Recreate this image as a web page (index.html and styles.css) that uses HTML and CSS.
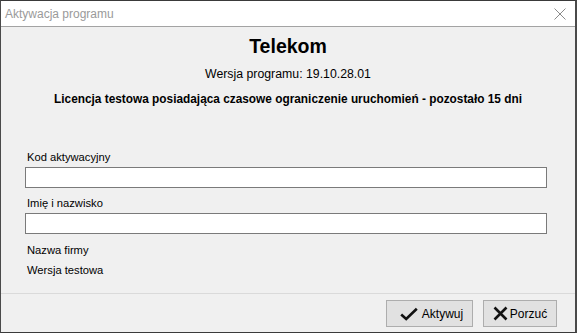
FILE: index.html
```html
<!DOCTYPE html>
<html lang="pl">
<head>
<meta charset="utf-8">
<link rel="stylesheet" href="styles.css">
</head>
<body>
<div class="window">
  <div class="titlebar">
    <span class="title">Aktywacja programu</span>
    <span class="close">
      <svg width="12" height="12" viewBox="0 0 12 12"><path d="M0.5 0.5 L11.5 11.5 M11.5 0.5 L0.5 11.5" stroke="#8a8a8a" stroke-width="1" fill="none"/></svg>
    </span>
  </div>
  <div class="content">
    <div class="app-name">Telekom</div>
    <div class="version">Wersja programu: 19.10.28.01</div>
    <div class="license">Licencja testowa posiadająca czasowe ograniczenie uruchomień - pozostało 15 dni</div>
    <div class="form">
      <label class="label">Kod aktywacyjny</label>
      <div class="input"></div>
      <label class="label">Imię i nazwisko</label>
      <div class="input"></div>
      <div class="label info first-info">Nazwa firmy</div>
      <div class="label info">Wersja testowa</div>
    </div>
  </div>
  <div class="footer">
    <button class="btn btn-ok">
      <svg width="18" height="14" viewBox="0 0 18 14"><path d="M1.2 7.5 L6.2 12 L16.8 1.8" stroke="#111" stroke-width="2.6" fill="none" stroke-linejoin="miter"/></svg>
      <span>Aktywuj</span>
    </button>
    <button class="btn btn-cancel">
      <svg width="15" height="15" viewBox="0 0 15 15"><path d="M1.5 1.5 L13.5 13.5 M13.5 1.5 L1.5 13.5" stroke="#111" stroke-width="2.6" fill="none"/></svg>
      <span>Porzuć</span>
    </button>
  </div>
</div>
</body>
</html>
```
FILE: styles.css
```css
html, body {
  margin: 0;
  padding: 0;
  background: #2a2a2a;
}
.window {
  width: 577px;
  height: 333px;
  box-sizing: border-box;
  border-top: 1px solid #3a3a3a;
  border-left: 1px solid #4a4a4a;
  border-right: 2px solid #4a4a4a;
  border-bottom: 1px solid #3a3a3a;
  background: #f0f0f0;
  display: flex;
  flex-direction: column;
  font-family: "Liberation Sans", Arial, sans-serif;
  color: #000;
}
.titlebar {
  height: 25px;
  flex: none;
  background: #fff;
  border-bottom: 1px solid #a3a3a3;
  display: flex;
  align-items: center;
  justify-content: space-between;
  padding: 0 0 0 4px;
}
.title {
  font-size: 12px;
  color: #9a9a9a;
}
.close {
  display: flex;
  align-items: center;
  justify-content: center;
  margin-right: 9px;
}
.content {
  flex: 1;
  display: flex;
  flex-direction: column;
  align-items: center;
}
.app-name {
  margin-top: 7px;
  font-size: 19.5px;
  font-weight: bold;
  line-height: 24px;
}
.version {
  margin-top: 8px;
  font-size: 12.3px;
  line-height: 16px;
}
.license {
  margin-top: 10px;
  font-size: 11.85px;
  font-weight: bold;
  line-height: 14px;
}
.form {
  align-self: stretch;
  margin: 44px 28px 0 24px;
  display: flex;
  flex-direction: column;
}
.label {
  display: block;
  font-size: 11.2px;
  line-height: 14px;
  margin-left: 2px;
  margin-bottom: 3px;
}
.input {
  height: 19px;
  background: #fff;
  border: 1px solid #7a7a7a;
  margin-bottom: 8px;
}
.first-info {
  margin-top: 1px;
  margin-bottom: 6px;
}
.footer {
  height: 39px;
  flex: none;
  border-top: 1px solid #dadada;
  display: flex;
  justify-content: flex-end;
  align-items: flex-start;
  padding: 6px 18px 0 0;
  gap: 10px;
  box-sizing: border-box;
}
.btn {
  height: 27px;
  background: #e1e1e1;
  border: 1px solid #adadad;
  display: flex;
  align-items: center;
  justify-content: center;
  gap: 4px;
  font-family: "Liberation Sans", Arial, sans-serif;
  font-size: 12px;
  color: #000;
  padding: 0;
  box-sizing: border-box;
}
.btn-ok { width: 87px; padding-left: 4px; }
.btn-cancel { width: 74px; gap: 2px; }
```
